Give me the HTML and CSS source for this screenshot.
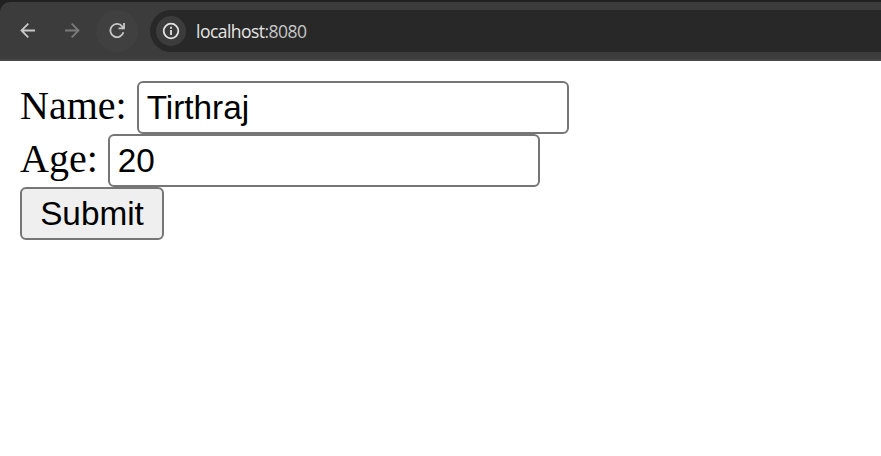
FILE: index.html
```html
<!DOCTYPE html>
<html lang="en">
<head>
<meta charset="utf-8">
<title>localhost:8080</title>
<link rel="stylesheet" href="styles.css">
</head>
<body>
<header class="frame">
  <div class="toolbar">
    <span class="nav back"><svg width="16" height="16" viewBox="0 0 16 16"><path d="M15 7.5H1.7M8.3 .7L1.5 7.5L8.3 14.3"/></svg></span>
    <span class="nav forward"><svg width="16" height="16" viewBox="0 0 16 16"><path d="M1 7.5H14.3M7.7 .7L14.5 7.5L7.7 14.3"/></svg></span>
    <span class="nav reload"><svg width="16" height="16" viewBox="0 0 16 16"><path d="M14.4 9.2A6.6 6.6 0 1 1 13.3 3.6L14.6 5.2M15 0V5.4H9.6"/></svg></span>
    <div class="omnibox">
      <span class="info"><svg width="18" height="18" viewBox="0 0 18 18"><circle cx="9" cy="9" r="7.3"/><path d="M9 8V13M9 4.8V6.7"/></svg></span>
      <span class="url">localhost<span class="port">:8080</span></span>
    </div>
  </div>
</header>
<main>
  <form>
    <div class="row"><label for="name">Name:</label> <input id="name" type="text" value="Tirthraj"></div>
    <div class="row"><label for="age">Age:</label> <input id="age" type="text" value="20"></div>
    <div class="row"><button type="button">Submit</button></div>
  </form>
</main>
</body>
</html>
```
FILE: styles.css
```css
* { box-sizing: border-box; }
body {
  margin: 0;
  background: #fff;
  color: #000;
  font: 40px "Liberation Serif", serif;
  overflow: hidden;
}
.frame {
  height: 61px;
  padding-top: 2px;
  background: #202120;
}
.toolbar {
  display: flex;
  align-items: flex-start;
  height: 59px;
  padding: 8px 0 0 7px;
  background: #3c3c3c;
  border-bottom: 2px solid #474747;
  border-top-left-radius: 10px;
}
.nav {
  display: flex;
  align-items: center;
  justify-content: center;
  width: 42px;
  height: 42px;
  margin-right: 2px;
  border-radius: 50%;
  color: #c7c7c7;
}
.nav.forward { color: #7b7b7b; margin-right: 3px; }
.nav.reload { background: #404040; margin-right: 12px; }
svg { display: block; fill: none; stroke: currentColor; stroke-width: 1.8; }
.omnibox {
  display: flex;
  flex: 1;
  align-items: center;
  height: 42px;
  padding-left: 6px;
  background: #282828;
  border-radius: 21px 0 0 21px;
}
.info {
  display: flex;
  align-items: center;
  justify-content: center;
  width: 30px;
  height: 30px;
  border-radius: 50%;
  background: #3c3c3c;
  color: #e3e3e3;
}
.url {
  margin-left: 10px;
  font: 17.5px/24px "Open Sans", sans-serif;
  letter-spacing: -0.53px;
  color: #e5e5e5;
}
.port { color: #c7c7c7; }
main { padding: 20px; }
.row { height: 53px; display: flex; align-items: center; }
label { margin: 0 10px 4px 0; line-height: 46px; }
input, button {
  height: 53px;
  font: 33.33px "Liberation Sans", sans-serif;
  color: #000;
  border: 2px solid #767676;
  border-radius: 6px;
  outline: 0;
}
input { width: 432px; padding: 2px 8px; background: #fff; }
button { width: 144px; padding: 0; background: #efefef; }
```
